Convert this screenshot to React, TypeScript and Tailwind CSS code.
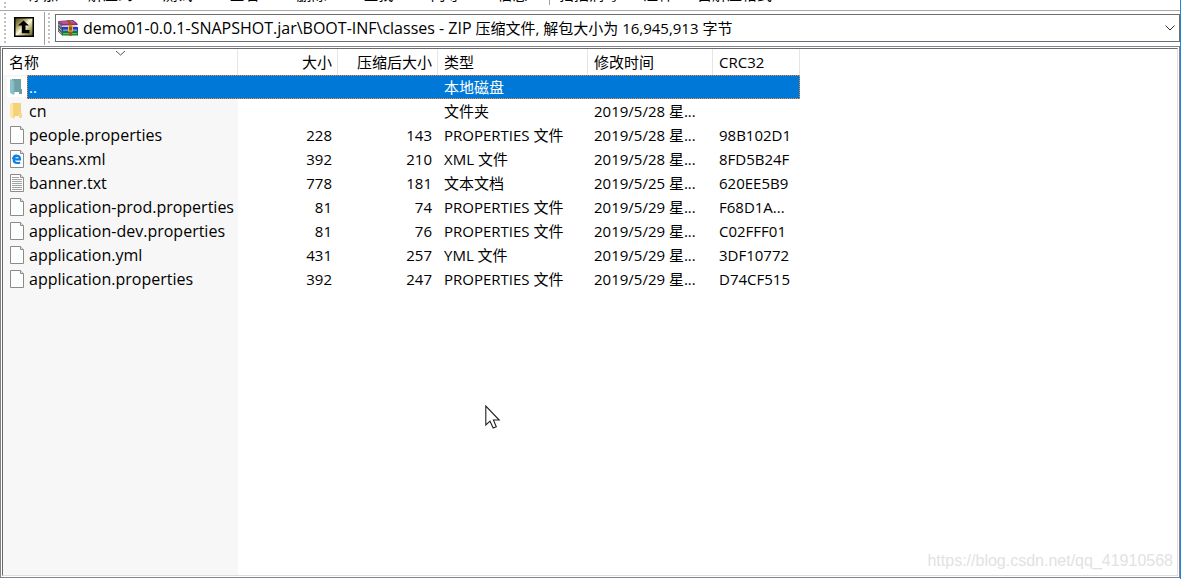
import React from "react";

type Kind = "drive" | "folder" | "file" | "xml" | "txt";
type Entry = {
  name: string;
  kind: Kind;
  size?: string;
  packed?: string;
  type: string;
  modified?: string;
  crc?: string;
};

const entries: Entry[] = [
  { name: "cn", kind: "folder", type: "文件夹", modified: "2019/5/28 星..." },
  { name: "people.properties", kind: "file", size: "228", packed: "143", type: "PROPERTIES 文件", modified: "2019/5/28 星...", crc: "98B102D1" },
  { name: "beans.xml", kind: "xml", size: "392", packed: "210", type: "XML 文件", modified: "2019/5/28 星...", crc: "8FD5B24F" },
  { name: "banner.txt", kind: "txt", size: "778", packed: "181", type: "文本文档", modified: "2019/5/25 星...", crc: "620EE5B9" },
  { name: "application-prod.properties", kind: "file", size: "81", packed: "74", type: "PROPERTIES 文件", modified: "2019/5/29 星...", crc: "F68D1A..." },
  { name: "application-dev.properties", kind: "file", size: "81", packed: "76", type: "PROPERTIES 文件", modified: "2019/5/29 星...", crc: "C02FFF01" },
  { name: "application.yml", kind: "file", size: "431", packed: "257", type: "YML 文件", modified: "2019/5/29 星...", crc: "3DF10772" },
  { name: "application.properties", kind: "file", size: "392", packed: "247", type: "PROPERTIES 文件", modified: "2019/5/29 星...", crc: "D74CF515" },
];

const actions = ["添加", "解压到", "测试", "查看", "删除", "查找", "向导", "信息"];
const extras = ["扫描病毒", "注释", "自解压格式"];

function EntryIcon({ kind }: { kind: Kind }) {
  if (kind === "drive" || kind === "folder") {
    const drive = kind === "drive";
    return (
      <svg className="h-5 w-5 shrink-0" viewBox="0 0 20 20" aria-hidden="true">
        {drive && <rect width="20" height="20" fill="#fff" />}
        <path d="M5 2H14V15H5Z" fill={drive ? "#6fa3a6" : "#f3d27c"} />
        <path d="M12 12H15V17H12Z" fill={drive ? "#6a9fa1" : "#f8dc8e"} />
        <path d="M3 2L7 4V18L3 16Z" fill={drive ? "#8cc0cb" : "#ffe6a0"} />
        <path d="M7 4V17" stroke={drive ? "#7fb0b6" : "#f0c96c"} />
      </svg>
    );
  }
  return (
    <svg className="h-5 w-5 shrink-0" viewBox="0 0 20 20" aria-hidden="true">
      <path d="M3.5 1.5H13.5L16.5 4.5V18.5H3.5Z" fill="#fcfdfd" stroke="#8c8c8c" />
      <path d="M13.5 1.5V4.5H16.5" fill="#e4e4e4" stroke="#8c8c8c" />
      {kind === "txt" && (
        <path d="M5 4.5H12M5 6.5H15M5 8.5H15M5 10.5H15M5 12.5H15M5 14.5H15M5 16.5H15" stroke="#a2a2a2" />
      )}
      {kind === "xml" && (
        <>
          <path d="M6.8 10.4H13C13 8.2 11.8 6.9 10 6.9C8 6.9 6.7 8.4 6.7 10.5C6.7 12.8 8.2 14 10.4 14C11.5 14 12.4 13.7 13 13.3" fill="none" stroke="#0f80e0" strokeWidth="2.2" />
          <path d="M5.6 10C6 7.6 7.6 6 9.6 5.8" fill="none" stroke="#0f80e0" strokeWidth="1.2" />
        </>
      )}
    </svg>
  );
}

function UpIcon() {
  return (
    <svg className="h-5 w-5" viewBox="0 0 20 20" aria-hidden="true">
      <defs>
        <linearGradient id="gold" x1="0" y1="0" x2="1" y2="1">
          <stop offset="0" stopColor="#4a431c" />
          <stop offset="0.3" stopColor="#a59c5c" />
          <stop offset="0.5" stopColor="#fbf8dc" />
          <stop offset="0.75" stopColor="#a59c5c" />
          <stop offset="1" stopColor="#5c5528" />
        </linearGradient>
      </defs>
      <rect x="0.75" y="0.75" width="18.5" height="18.5" fill="url(#gold)" stroke="#000" strokeWidth="1.5" />
      <path d="M9.5 3.5L15 8.5H11.5V13H15.5V16.2H7.8V8.5H4Z" fill="#000" />
    </svg>
  );
}

function ArchiveIcon() {
  return (
    <svg className="h-4 w-5 shrink-0" viewBox="0 0 20 16" aria-hidden="true">
      <path d="M0 1L15 0L19 3L20 5L4 6Z" fill="#8d2f72" />
      <path d="M1 1.5L14 0.8L18 3.5L5 4Z" fill="#b9559a" />
      <path d="M0 1L4 5V15.5L0 11.5Z" fill="#59616b" />
      <path d="M0.5 4L3.5 7M0.5 7.5L3.5 10.5M0.5 10.5L3.5 13.5" stroke="#c9ced4" strokeWidth="0.8" />
      <path d="M4 5.5H19V7.5H4Z" fill="#d8d3d8" />
      <path d="M4 7H20V11H4Z" fill="#2137c8" />
      <path d="M5 9.6H19V10.6H5Z" fill="#a9c8f4" />
      <path d="M4 11H20V15.5H4Z" fill="#157c2c" />
      <path d="M5 13.2H19V14.2H5Z" fill="#6dce68" />
      <path d="M8.5 0.3H11.5L14 4V15.8H11V4Z" fill="#9c5420" />
      <rect x="10.5" y="6" width="4" height="5" fill="none" stroke="#f0bb42" />
    </svg>
  );
}

function Grip({ className }: { className: string }) {
  return (
    <svg className={className} aria-hidden="true">
      <defs>
        <pattern id="grip" width="2" height="4" patternUnits="userSpaceOnUse">
          <rect width="2" height="2" fill="#c2c2c2" />
        </pattern>
      </defs>
      <rect width="2" height="100%" fill="url(#grip)" />
    </svg>
  );
}

export default function App() {
  return (
    <div className="flex min-h-screen flex-col overflow-hidden border-r border-[#1a86e0] bg-white font-['Open_Sans','Noto_Sans_CJK_SC',sans-serif] text-[15px] leading-6 text-black">
      <nav className="flex h-[10px] items-end overflow-hidden pl-1" aria-label="工具栏">
        <Grip className="h-[8px] w-[2px] shrink-0" />
        <div className="flex items-end pl-1">
          {actions.map((label) => (
            <button key={label} className="h-8 w-[67px] shrink-0 whitespace-nowrap leading-4">
              {label}
            </button>
          ))}
        </div>
        <span className="mb-[5px] ml-[3px] h-5 w-px bg-[#a0a0a0]" />
        <div className="flex items-end gap-6 pl-[9px]">
          {extras.map((label) => (
            <button key={label} className="h-8 shrink-0 whitespace-nowrap leading-4">
              {label}
            </button>
          ))}
        </div>
      </nav>

      <div className="flex h-9 items-stretch border-t border-[#a8a8a8] pl-1">
        <Grip className="mt-[2px] h-8 w-[2px] shrink-0" />
        <button className="flex w-[38px] items-center pb-1 pl-2" aria-label="上一级">
          <UpIcon />
        </button>
        <span className="mb-px mt-px w-px bg-[#a0a0a0]" />
        <Grip className="ml-[3px] mt-[2px] h-8 w-[2px] shrink-0" />
        <button className="mb-1 ml-[5px] mt-[3px] flex flex-1 items-center border border-[#6e6e6e] pl-[2px] pr-1 text-left">
          <ArchiveIcon />
          <span className="ml-[5px] flex-1 whitespace-pre">
            <span className="text-base leading-6">demo01-0.0.1-SNAPSHOT.jar\BOOT-INF\classes - ZIP</span>
            {" 压缩文件, 解包大小为 16,945,913 字节"}
          </span>
          <svg className="h-[6px] w-[10px]" viewBox="0 0 10 6" fill="none" stroke="#333" aria-hidden="true">
            <path d="M0.5 0.5L5 5L9.5 0.5" />
          </svg>
        </button>
      </div>

      <main className="relative mb-px flex flex-1 flex-col border border-[#82828c] p-px">
        <div className="flex flex-1 border border-b-[#dedede] border-l-[#6a6a6a] border-r-[#dedede] border-t-[#6a6a6a] bg-[linear-gradient(to_right,#f7f7f7_235px,#ffffff_235px)]">
          <table className="h-fit w-[797px] table-fixed border-separate border-spacing-0">
            <colgroup>
              <col className="w-[235px]" />
              <col className="w-[100px]" />
              <col className="w-[100px]" />
              <col className="w-[150px]" />
              <col className="w-[125px]" />
              <col />
            </colgroup>
            <thead>
              <tr className="h-[26px] bg-white *:border-r *:border-[#e5e5e5] *:py-0 *:pl-[6px] *:pr-[5px] *:font-normal">
                <th className="relative text-left">
                  名称
                  <svg className="absolute left-[113px] top-[2px] h-[5px] w-[9px]" viewBox="0 0 9 5" fill="none" stroke="#555" aria-hidden="true">
                    <path d="M0 0L4.5 4L9 0" />
                  </svg>
                </th>
                <th className="text-right">大小</th>
                <th className="text-right">压缩后大小</th>
                <th className="text-left">类型</th>
                <th className="text-left">修改时间</th>
                <th className="text-left">CRC32</th>
              </tr>
            </thead>
            <tbody>
              <tr className="h-6 text-white *:p-0">
                <td colSpan={6}>
                  <div className="flex h-6">
                    <span className="flex w-6 items-center pl-1">
                      <EntryIcon kind="drive" />
                    </span>
                    <span className="flex flex-1 items-center border border-dotted border-[#ff8728] bg-[#0078d7]">
                      <span className="w-[410px] px-px">..</span>
                      <span className="px-[6px]">本地磁盘</span>
                    </span>
                  </div>
                </td>
              </tr>
              {entries.map((e) => (
                <tr key={e.name} className="h-6 whitespace-nowrap *:px-[6px] *:py-0">
                  <td>
                    <div className="-ml-[2px] flex items-center gap-[2px] text-base leading-6">
                      <EntryIcon kind={e.kind} />
                      {e.name}
                    </div>
                  </td>
                  <td className="text-right">{e.size}</td>
                  <td className="text-right">{e.packed}</td>
                  <td>{e.type}</td>
                  <td>{e.modified}</td>
                  <td>{e.crc}</td>
                </tr>
              ))}
            </tbody>
          </table>
        </div>
        <p className="absolute bottom-1 right-[6px] font-['Liberation_Sans',sans-serif] text-base text-[#e2e2e2]">
          https://blog.csdn.net/qq_41910568
        </p>
        <svg className="absolute left-[484px] top-[358px] h-6 w-4" viewBox="0 0 16 24" aria-hidden="true">
          <path d="M0.8 1V20L5 16.2L8.2 23L11.3 21.7L8.4 15H14.2Z" fill="#fff" stroke="#222" strokeWidth="1.1" />
        </svg>
      </main>
    </div>
  );
}
